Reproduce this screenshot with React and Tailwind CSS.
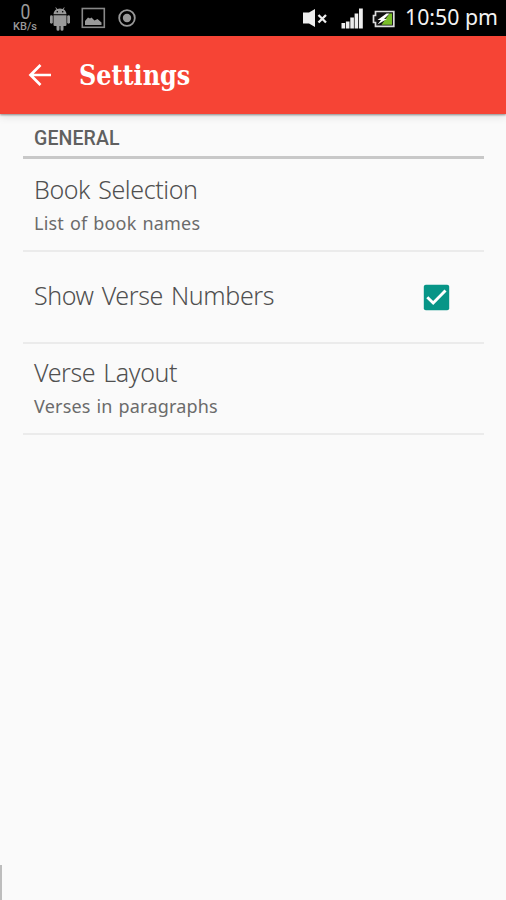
function StatusBar() {
  return (
    <header className="flex h-9 shrink-0 items-start bg-black text-[#999]">
      <div className="flex w-[26px] ml-3 flex-col items-center font-['Roboto',sans-serif]">
        <span className="mt-[3px] h-[18px] text-[19.500px] leading-[20px] scale-x-90">0</span>
        <span className="text-[11px] leading-[11px] font-medium">KB/s</span>
      </div>
      <svg className="ml-[11px] mt-[7px]" width="22" height="24" viewBox="0 0 22 24" fill="#999">
        <path d="M4.500 7.200C4.700 4.800 5.800 3.300 7.500 2.300L6.300.7l.6-.5 1.400 1.700a8 8 0 0 1 5.400 0L15.100.2l.6.5-1.200 1.600c1.700 1 2.800 2.500 3 4.900z" />
        <path d="M4.500 8.200h13v9.500q0 1.300-1.300 1.300H14.500v3.200a1.500 1.500 0 0 1-3 0V19h-1v3.200a1.500 1.500 0 0 1-3 0V19H5.800q-1.300 0-1.300-1.300z" />
        <rect x="1" y="8.200" width="2.800" height="8.500" rx="1.400" />
        <rect x="18.200" y="8.200" width="2.800" height="8.500" rx="1.400" />
        <circle cx="8.300" cy="4.800" r=".8" fill="#000" />
        <circle cx="13.700" cy="4.800" r=".8" fill="#000" />
      </svg>
      <svg className="ml-[10px] mt-[7px]" width="25" height="22" viewBox="0 0 25 22">
        <rect x="1.300" y="1.500" width="22" height="18.800" fill="none" stroke="#888" strokeWidth="1.600" />
        <path d="M4 18v-4l3-3.500 2 1 1.500-1 3 3 3-1.500 4 3.500V18z" fill="#999" />
      </svg>
      <svg className="ml-[11px] mt-[8px]" width="20" height="20" viewBox="0 0 20 20">
        <circle cx="10" cy="10" r="7.800" fill="none" stroke="#999" strokeWidth="1.800" />
        <circle cx="10" cy="10" r="4.200" fill="#999" />
      </svg>
      <svg className="ml-auto mt-2" width="26" height="20" viewBox="0 0 26 20">
        <path d="M1 4.500h6L13 1v18l-6-3.500H1z" fill="#eee" />
        <path d="m16.500 7 7.500 7.500m0-7.500-7.500 7.500" stroke="#eee" strokeWidth="2.300" />
      </svg>
      <svg className="ml-[13px] mt-2" width="23" height="21" viewBox="0 0 23 21" fill="#eee">
        <path d="M.5 15h3.600v5.500H.5zM4.900 13.500h3.600v7H4.900zM9.300 9.500h3.600v11H9.300zM13.600 5.500h3.600v15h-3.600zM18 .5h3.800v20H18z" />
      </svg>
      <svg className="ml-[8px] mt-[10px]" width="24" height="18" viewBox="0 0 24 18">
        <path d="M3.500 1.500h18.300v14.800H3.500V12.500H1.500V5.500h2z" fill="#111" stroke="#ddd" strokeWidth="1.700" />
        <path d="M17.500 3.500H20v11.200H9.500z" fill="#79bd28" />
        <path d="m14.500 3.500-9 6.500h3.500L5.500 14.500l9.500-5.500h-3L17.500 3.500z" fill="#fff" />
      </svg>
      <div className="ml-[9px] mr-[7px] w-[94px] origin-left scale-x-[.945] whitespace-nowrap pt-[2px] text-[22.500px] leading-[29px] text-[#f3f3f3] font-['Noto_Sans',sans-serif]">10:50 pm</div>
    </header>
  );
}

function AppBar() {
  return (
    <div className="z-10 flex h-[78px] shrink-0 items-center bg-[#f64435] shadow-[0_1px_2px_rgba(0,0,0,.4),0_3px_8px_rgba(0,0,0,.1)]">
      <svg className="ml-7" width="24" height="24" viewBox="0 0 24 24" fill="none" stroke="#fff" strokeWidth="2.700">
        <path d="M23 12H2.500M12.500 2 2.500 12 12.500 22" />
      </svg>
      <h1 className="ml-[27px] origin-left whitespace-nowrap pt-[2px] text-[27px] font-bold leading-9 text-white font-['DejaVu_Serif_Condensed','DejaVu_Serif',serif] scale-x-[.985]">Settings</h1>
    </div>
  );
}

function Preference({ title, summary, checked, className }) {
  return (
    <div className={`flex items-center border-b-2 border-[#ebebeb] pl-[11px] font-['Noto_Sans',sans-serif] ${className}`}>
      <div className="flex-1 whitespace-nowrap">
        <div className="text-[25px] font-light leading-[34px] tracking-[-.4px] [word-spacing:2px] text-[#505050]">{title}</div>
        {summary && <div className="text-[18px] leading-[34px] tracking-[.2px] [word-spacing:1px] text-[#6b6b6b]">{summary}</div>}
      </div>
      {checked && (
        <svg className="mr-[34px] mt-[4px]" width="27" height="27" viewBox="0 0 27 27">
          <rect x=".8" y=".8" width="25.400" height="25.400" rx="2" fill="#079587" />
          <path d="m4.300 13.200 5.900 5.800L22.500 6.500" fill="none" stroke="#fff" strokeWidth="2.900" />
        </svg>
      )}
    </div>
  );
}

export default function App() {
  return (
    <div className="flex h-[900px] w-[506px] flex-col overflow-hidden bg-[#fafafa]">
      <StatusBar />
      <AppBar />
      <main className="ml-[23px] mr-[22px] flex-1">
        <h2 className="h-[45px] border-b-[3px] border-[#c8c8c8] pl-[11px] pt-[13px] text-[19.500px] font-medium leading-6 tracking-[.1px] text-[#606060] font-['Roboto',sans-serif]">GENERAL</h2>
        <Preference title="Book Selection" summary="List of book names" className="h-[93px] pt-[3px]" />
        <Preference title="Show Verse Numbers" checked className="h-[92px] pb-[4px]" />
        <Preference title="Verse Layout" summary="Verses in paragraphs" className="h-[91px]" />
      </main>
      <div className="h-[35px] w-[2px] shrink-0 bg-[#bdbdbd]" />
    </div>
  );
}
